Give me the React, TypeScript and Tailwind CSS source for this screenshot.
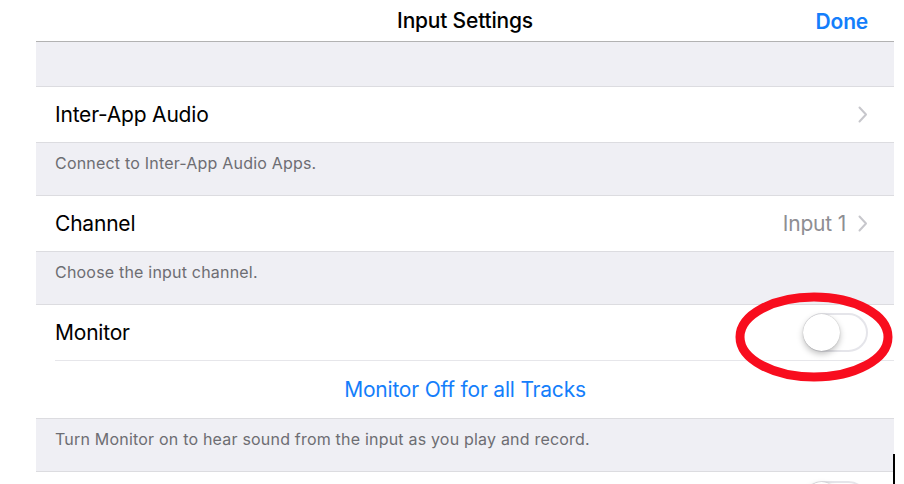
const font = "font-['Inter','Noto_Sans',sans-serif]";

function Chevron() {
  return (
    <svg width="10" height="17" viewBox="0 0 10 17" className="ml-[12px]">
      <path d="M1.5 1.5 L8 8.5 L1.5 15.5" fill="none" stroke="#c7c7cc" strokeWidth="2" strokeLinecap="round" strokeLinejoin="round" />
    </svg>
  );
}

function Toggle() {
  return (
    <div className="relative h-[39px] w-[65px] rounded-full border-2 border-[#e5e5ea] bg-white">
      <div className="absolute left-[-2px] top-[-1px] h-[37px] w-[37px] rounded-full bg-white shadow-[0_3px_6px_rgba(0,0,0,0.25),0_0_1px_rgba(0,0,0,0.3)]" />
    </div>
  );
}

function Footer({ text }: { text: string }) {
  return (
    <div className="h-[53px] border-b border-[#dcdce0] bg-[#efeff4] pl-[19px] pt-[10px]">
      <p className="text-[16px] leading-[20px] tracking-[0.2px] text-[#6d6d72]">{text}</p>
    </div>
  );
}

export default function App() {
  return (
    <div className={`relative h-[484px] w-[904px] overflow-hidden bg-white ${font}`}>
      <div className="ml-[36px] w-[858px]">
        <header className="relative flex h-[42px] items-center justify-center border-b border-[#b2b2b2]">
          <h1 className="mt-[1px] text-[21px] font-medium tracking-[-0.2px] text-black">Input Settings</h1>
          <button className="absolute right-[26px] top-[6px] text-[21px] font-semibold tracking-[-0.2px] text-[#147efb]">
            Done
          </button>
        </header>
        <div className="h-[45px] border-b border-[#dcdce0] bg-[#efeff4]" />

        <div className="flex h-[56px] items-center justify-between border-b border-[#dcdce0] pl-[19px] pr-[26px]">
          <span className="text-[21px] tracking-[-0.2px] text-black">Inter-App Audio</span>
          <Chevron />
        </div>
        <Footer text="Connect to Inter-App Audio Apps." />

        <div className="flex h-[56px] items-center justify-between border-b border-[#dcdce0] pl-[19px] pr-[26px]">
          <span className="text-[21px] tracking-[-0.2px] text-black">Channel</span>
          <div className="flex items-center">
            <span className="text-[21px] tracking-[-0.2px] text-[#8e8e93]">Input 1</span>
            <Chevron />
          </div>
        </div>
        <Footer text="Choose the input channel." />

        <div className="pl-[19px]">
          <div className="flex h-[56px] items-center justify-between border-b border-[#e6e6ea] pr-[26px]">
            <span className="text-[21px] tracking-[-0.2px] text-black">Monitor</span>
            <Toggle />
          </div>
        </div>
        <div className="flex h-[58px] items-center justify-center border-b border-[#dcdce0]">
          <span className="text-[21px] tracking-[-0.2px] text-[#147efb]">Monitor Off for all Tracks</span>
        </div>
        <Footer text="Turn Monitor on to hear sound from the input as you play and record." />

        <div className="flex h-[56px] items-center justify-end pr-[26px]">
          <Toggle />
        </div>
      </div>

      <svg className="absolute left-[734px] top-[290px]" width="162" height="94" viewBox="0 0 162 94">
        <ellipse cx="80" cy="47" rx="74" ry="40" fill="none" stroke="#f80d1e" strokeWidth="9" />
      </svg>
      <div className="absolute left-[893px] top-[454px] h-[30px] w-[2px] bg-black" />
    </div>
  );
}
